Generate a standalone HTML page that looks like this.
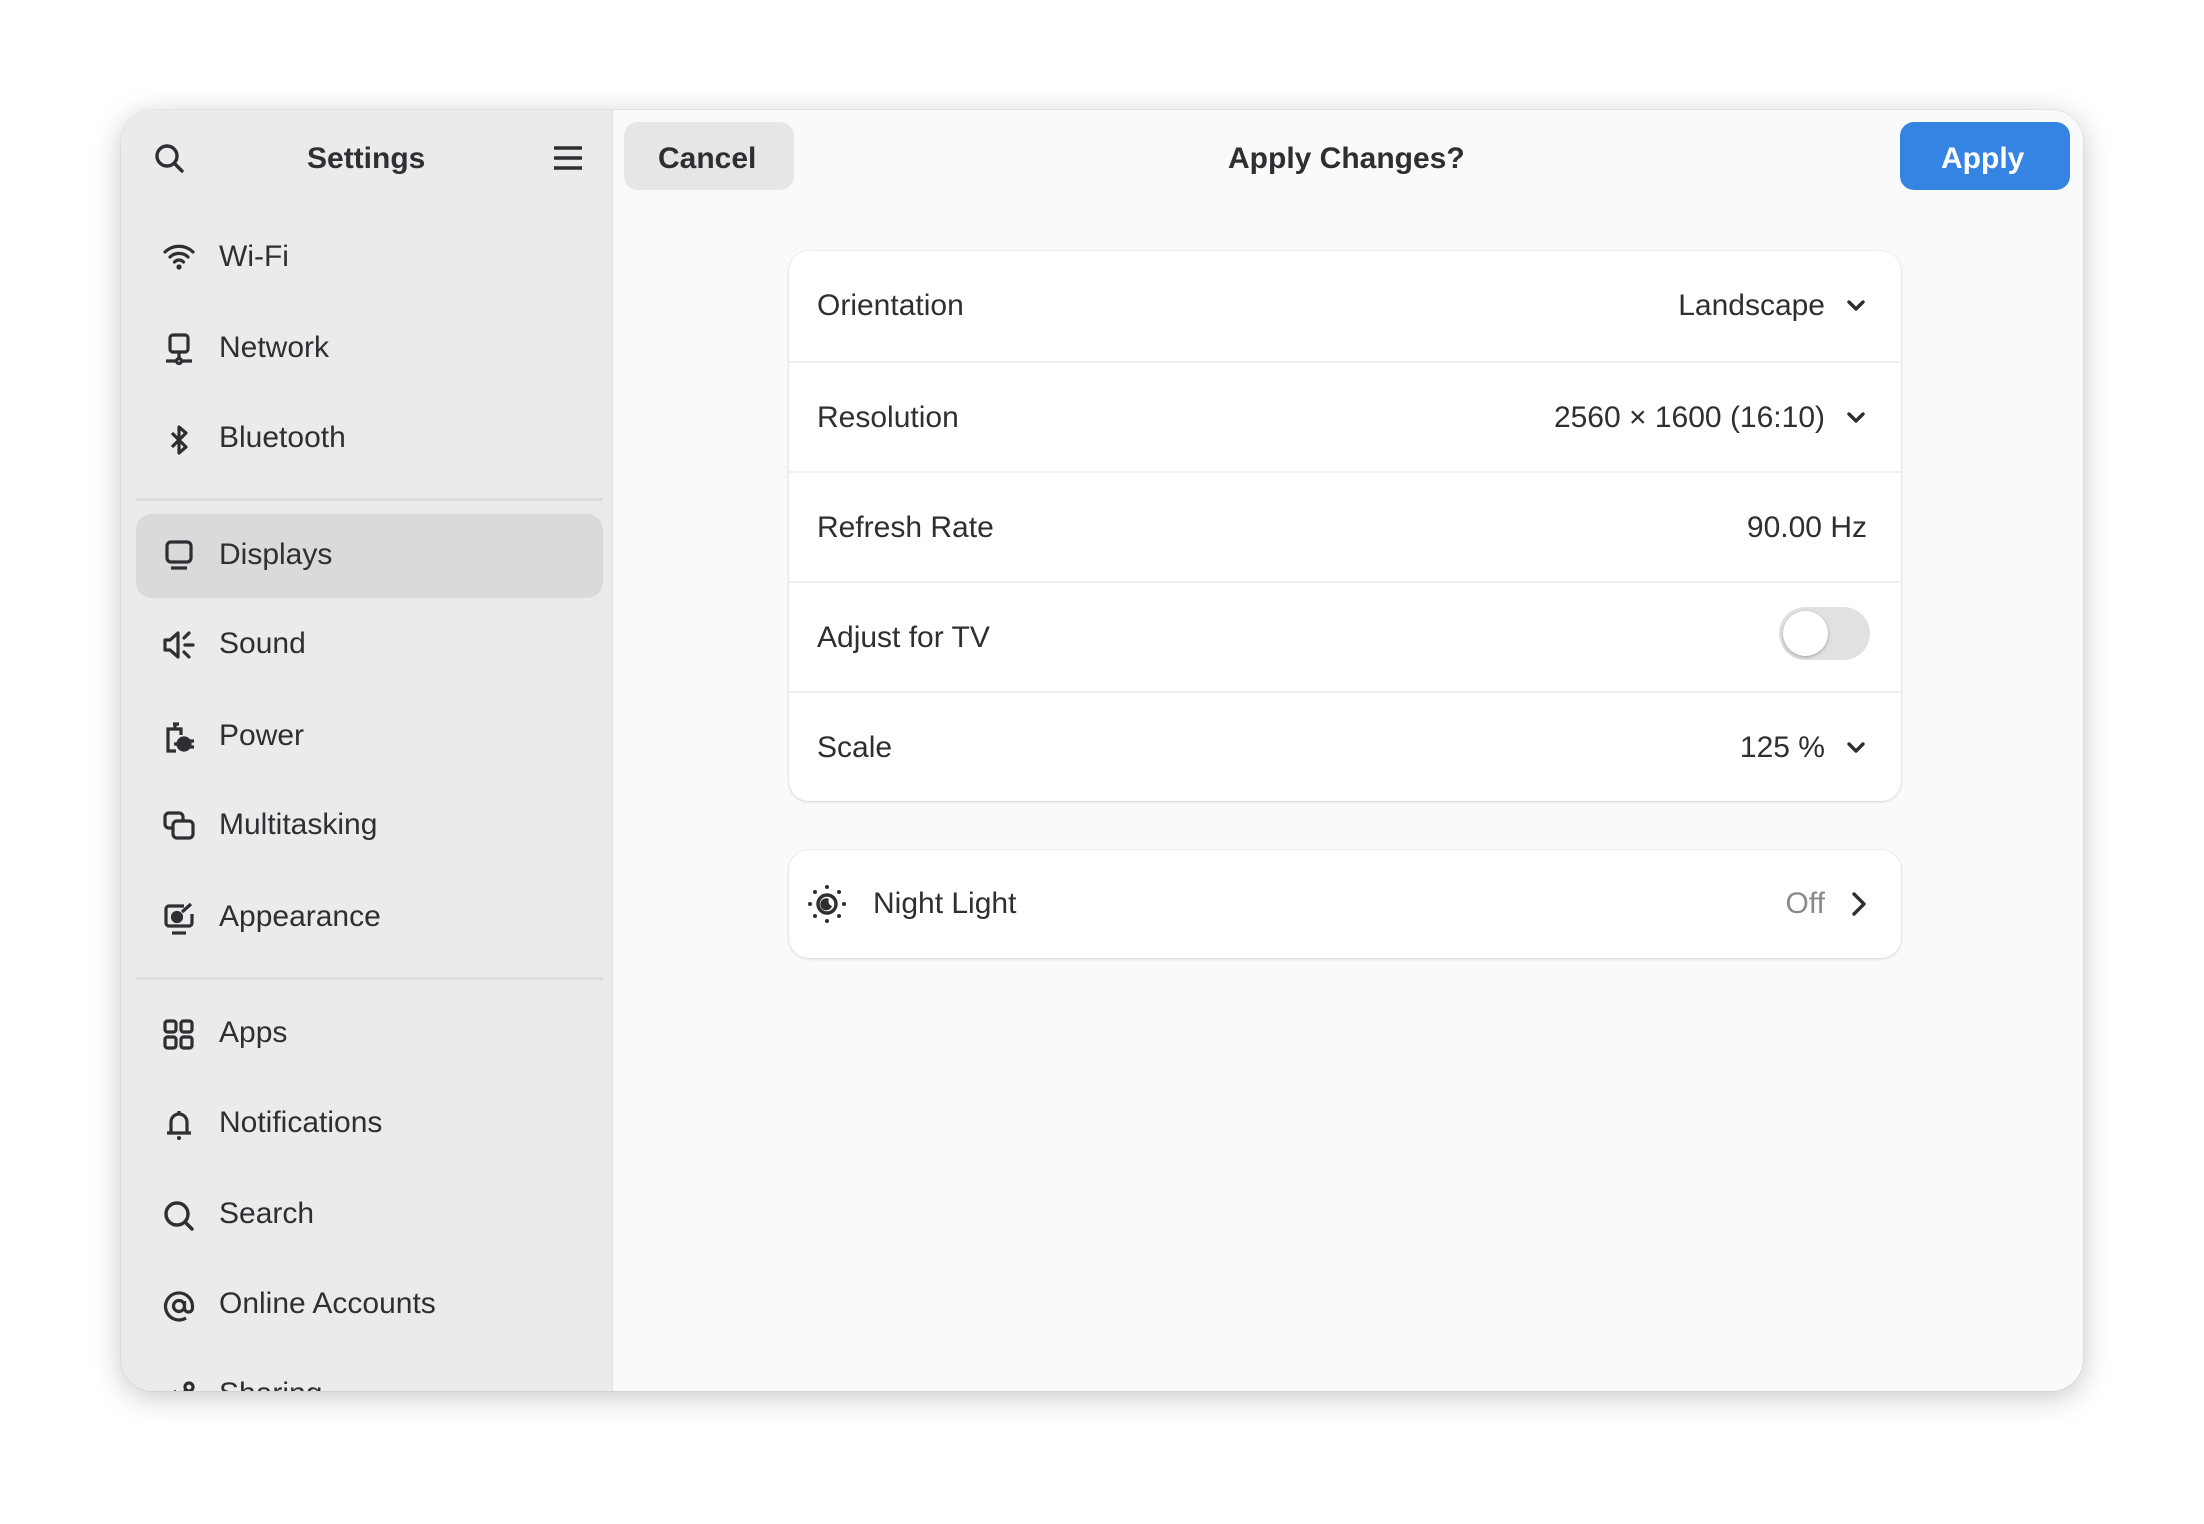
<!DOCTYPE html>
<html><head><meta charset="utf-8"><style>
*{margin:0;padding:0;box-sizing:border-box}
body{width:2204px;height:1524px;background:#fff;font-family:"Liberation Sans",sans-serif;color:#2e2e33;position:relative;overflow:hidden}
.win{position:absolute;left:121px;top:110px;width:1962px;height:1281px;border-radius:32px;background:#fafafa;overflow:hidden;box-shadow:0 6px 30px rgba(0,0,0,.22),0 0 0 1px rgba(0,0,0,.04)}
.side{position:absolute;left:0;top:0;width:492px;height:100%;background:#ebebed;border-right:1px solid #e0e0e2}
.abs{position:absolute}
.t{position:absolute;font-size:30px;white-space:nowrap;line-height:1}
.hd{font-weight:bold;font-size:30px}
.item{position:absolute;left:0;width:492px;height:60px}
.item svg{position:absolute;left:41px;top:15px}
.item span{position:absolute;left:98px;top:15px;font-size:30px;line-height:1;white-space:nowrap}
.sep{position:absolute;left:15px;width:467px;height:3px;background:#dcdcde}
.card{position:absolute;left:668px;width:1112px;background:#fff;border-radius:20px;box-shadow:0 1px 3px rgba(0,0,0,.12),0 0 0 1px rgba(0,0,0,.03)}
.row{position:absolute;left:0;width:100%;height:110px;border-top:2px solid #f0f0f0}
.row .l{position:absolute;left:28px;top:40px;font-size:30px;line-height:1}
.row .v{position:absolute;right:76px;top:40px;font-size:30px;line-height:1}
.row svg.ch{position:absolute;right:34px;top:44px}
</style></head><body>
<div class="win">
 <div class="side">
  <svg class="abs" style="left:33px;top:33px" width="32" height="32" viewBox="0 0 32 32" fill="none" stroke="#2e2e33" stroke-width="3.4" stroke-linecap="round"><circle cx="13" cy="13" r="10"/><path d="M21 21l7 7"/></svg>
  <div class="t hd" style="left:186px;top:34px">Settings</div>
  <svg class="abs" style="left:432px;top:35px" width="30" height="26" viewBox="0 0 30 26" stroke="#2e2e33" stroke-width="3.4"><path d="M1 3h28M1 13h28M1 23h28"/></svg>

  <div class="item" style="top:117px"><svg width="34" height="30" viewBox="0 0 34 30" fill="none" stroke="#2e2e33" stroke-width="3.2" stroke-linecap="round"><path d="M3 10a20 20 0 0 1 28 0M8 15a13 13 0 0 1 18 0M12.5 20a6 6 0 0 1 9 0"/><circle cx="17" cy="25" r="2.6" fill="#2e2e33" stroke="none"/></svg><span>Wi-Fi</span></div>
  <div class="item" style="top:208px"><svg width="34" height="32" viewBox="0 0 34 32" fill="none" stroke="#2e2e33" stroke-width="3.2"><rect x="8" y="2" width="18" height="17" rx="3"/><path d="M17 19v8M4 28h26"/><circle cx="17" cy="28" r="2.5" fill="#ebebed"/></svg><span>Network</span></div>
  <div class="item" style="top:298px"><svg width="34" height="34" viewBox="0 0 34 34" fill="none" stroke="#2e2e33" stroke-width="3.2" stroke-linejoin="round"><path d="M10 10l14 14-7 6V4l7 6-14 14"/></svg><span>Bluetooth</span></div>
  <div class="sep" style="top:388px"></div>
  <div class="item" style="top:404px;left:15px;width:467px;height:84px;background:#dadadc;border-radius:16px"></div>
  <div class="item" style="top:415px"><svg width="34" height="32" viewBox="0 0 34 32" fill="none" stroke="#2e2e33" stroke-width="3.2"><rect x="5" y="2" width="24" height="20" rx="4"/><path d="M9 28h16"/></svg><span>Displays</span></div>
  <div class="item" style="top:504px"><svg width="34" height="32" viewBox="0 0 34 32" fill="none" stroke="#2e2e33" stroke-width="3.2" stroke-linejoin="round" stroke-linecap="round"><path d="M3 11h5l8-7v24l-8-7H3z"/><path d="M22 9l5-5M23 16h8M22 23l5 5"/></svg><span>Sound</span></div>
  <div class="item" style="top:596px"><svg width="34" height="34" viewBox="0 0 34 34" fill="none" stroke="#2e2e33" stroke-width="3.2"><path d="M13 8V3M11 3h6"/><path d="M14 30H6V8h13v6"/><circle cx="22" cy="23" r="6" fill="#2e2e33"/><path d="M27 20h5M27 26h5M12 23h4"/></svg><span>Power</span></div>
  <div class="item" style="top:685px"><svg width="34" height="32" viewBox="0 0 34 32" fill="none" stroke="#2e2e33" stroke-width="3.2"><rect x="3" y="3" width="18" height="15" rx="4"/><rect x="11" y="11" width="20" height="17" rx="4" fill="#ebebed"/></svg><span>Multitasking</span></div>
  <div class="item" style="top:777px"><svg width="34" height="34" viewBox="0 0 34 34" fill="none" stroke="#2e2e33" stroke-width="3.2"><path d="M22 4H7a3 3 0 0 0-3 3v14a3 3 0 0 0 3 3h20a3 3 0 0 0 3-3v-9"/><path d="M10 31h14"/><circle cx="15" cy="15" r="4.5" fill="#2e2e33"/><path d="M20 10l9-8"/></svg><span>Appearance</span></div>
  <div class="sep" style="top:867px"></div>
  <div class="item" style="top:893px"><svg width="34" height="34" viewBox="0 0 34 34" fill="none" stroke="#2e2e33" stroke-width="3.2"><rect x="3" y="3" width="11" height="11" rx="2.5"/><rect x="19" y="3" width="11" height="11" rx="2.5"/><rect x="3" y="19" width="11" height="11" rx="2.5"/><rect x="19" y="19" width="11" height="11" rx="2.5"/></svg><span>Apps</span></div>
  <div class="item" style="top:983px"><svg width="34" height="34" viewBox="0 0 34 34" fill="none" stroke="#2e2e33" stroke-width="3.2" stroke-linejoin="round"><path d="M9 25V14a8 8 0 0 1 16 0v11zM5 25h24M17 3v3"/><circle cx="17" cy="30" r="2" fill="#2e2e33" stroke="none"/></svg><span>Notifications</span></div>
  <div class="item" style="top:1074px"><svg width="34" height="34" viewBox="0 0 34 34" fill="none" stroke="#2e2e33" stroke-width="3.4" stroke-linecap="round"><circle cx="15" cy="15" r="11"/><path d="M23 23l7 7"/></svg><span>Search</span></div>
  <div class="item" style="top:1164px"><svg width="34" height="34" viewBox="0 0 34 34" fill="none" stroke="#2e2e33" stroke-width="3.2"><circle cx="17" cy="17" r="5.5"/><path d="M22.5 12v7a4 4 0 0 0 8 0v-2A13.5 13.5 0 1 0 24 29"/></svg><span>Online Accounts</span></div>
  <div class="item" style="top:1254px"><svg width="34" height="34" viewBox="0 0 34 34" fill="none" stroke="#2e2e33" stroke-width="3.2"><circle cx="27" cy="8" r="4"/><circle cx="6" cy="20" r="3"/><path d="M8 18l5-5 5 5 6-7"/></svg><span>Sharing</span></div>
 </div>

 <div class="abs" style="left:503px;top:12px;width:170px;height:68px;background:#e6e6e8;border-radius:14px"></div>
 <div class="t hd" style="left:537px;top:34px">Cancel</div>
 <div class="t hd" style="left:1107px;top:34px">Apply Changes?</div>
 <div class="abs" style="left:1779px;top:12px;width:170px;height:68px;background:#3584e4;border-radius:14px"></div>
 <div class="t hd" style="left:1820px;top:34px;color:#fff">Apply</div>

 <div class="card" style="top:141px;height:550px">
  <div class="row" style="top:0;border-top:none"><div class="l">Orientation</div><div class="v">Landscape</div><svg class="ch" width="22" height="22" viewBox="0 0 22 22" fill="none" stroke="#2e2e33" stroke-width="3.4" stroke-linecap="round" stroke-linejoin="round"><path d="M4 7l7 7 7-7"/></svg></div>
  <div class="row" style="top:110px"><div class="l">Resolution</div><div class="v">2560 × 1600 (16:10)</div><svg class="ch" width="22" height="22" viewBox="0 0 22 22" fill="none" stroke="#2e2e33" stroke-width="3.4" stroke-linecap="round" stroke-linejoin="round"><path d="M4 7l7 7 7-7"/></svg></div>
  <div class="row" style="top:220px"><div class="l">Refresh Rate</div><div class="v" style="right:34px">90.00 Hz</div></div>
  <div class="row" style="top:330px"><div class="l">Adjust for TV</div>
   <div class="abs" style="left:990px;top:24px;width:91px;height:53px;border-radius:27px;background:#e1e1e3"></div>
   <div class="abs" style="left:994px;top:28px;width:45px;height:45px;border-radius:50%;background:#fff;box-shadow:0 1px 3px rgba(0,0,0,.3)"></div></div>
  <div class="row" style="top:440px"><div class="l">Scale</div><div class="v">125 %</div><svg class="ch" width="22" height="22" viewBox="0 0 22 22" fill="none" stroke="#2e2e33" stroke-width="3.4" stroke-linecap="round" stroke-linejoin="round"><path d="M4 7l7 7 7-7"/></svg></div>
 </div>

 <div class="card" style="top:740px;height:108px">
  <svg class="abs" style="left:18px;top:34px" width="40" height="40" viewBox="0 0 40 40"><circle cx="20" cy="20" r="9" fill="none" stroke="#2e2e33" stroke-width="3.4"/><path d="M22 15a6 6 0 1 0 3 7 5 5 0 0 1-3-7z" fill="#2e2e33"/><g fill="#2e2e33"><circle cx="20" cy="3" r="2"/><circle cx="20" cy="37" r="2"/><circle cx="3" cy="20" r="2"/><circle cx="37" cy="20" r="2"/><circle cx="8" cy="8" r="2"/><circle cx="32" cy="8" r="2"/><circle cx="8" cy="32" r="2"/><circle cx="32" cy="32" r="2"/></g></svg>
  <div class="t" style="left:84px;top:39px">Night Light</div>
  <div class="t" style="right:76px;top:39px;color:#8a8a8e">Off</div>
  <svg class="abs" style="right:32px;top:40px" width="22" height="28" viewBox="0 0 22 28" fill="none" stroke="#2e2e33" stroke-width="3.4" stroke-linecap="round" stroke-linejoin="round"><path d="M7 4l10 10-10 10"/></svg>
 </div>
</div>
</body></html>
